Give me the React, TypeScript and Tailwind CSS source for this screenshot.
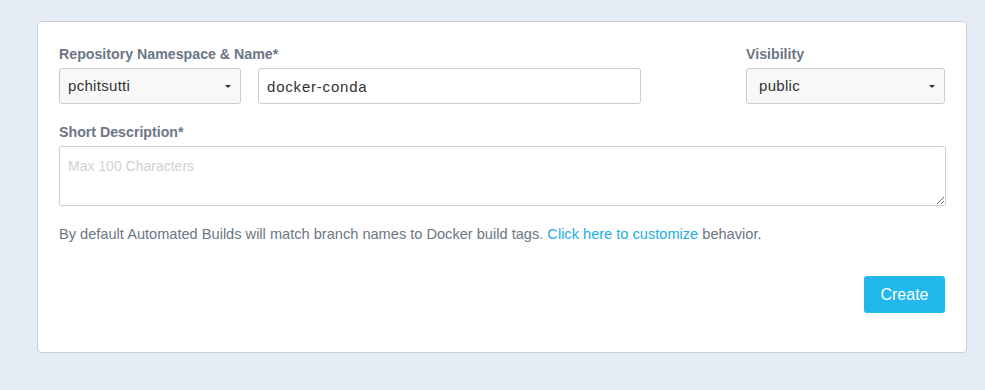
export default function App() {
  return (
    <div
      className="min-h-[390px] w-full bg-[#e6ecf5] pt-[21px] pl-[37px] pr-[19px]"
      style={{ fontFamily: '"Liberation Sans", Arial, sans-serif' }}
    >
      <div className="w-[930px] h-[332px] bg-white border border-[#c9ced6] rounded px-[21px] pt-[23px]">
        {/* Repo name row */}
        <div className="flex">
          <div>
            <label className="block text-[14.2px] font-bold text-[#6c7686] leading-[18px] mb-[5px]">
              Repository Namespace &amp; Name*
            </label>
            <div className="flex gap-[17px]">
              <div className="relative w-[182px] h-[36px] bg-[#f8f8f8] border border-[#ccc] rounded-[3px] flex items-center pl-[8px] text-[15px] tracking-[0.3px] text-[#333]">
                pchitsutti
                <span className="absolute right-[9px] top-[16px] w-0 h-0 border-l-[3px] border-r-[3px] border-t-[3px] border-l-transparent border-r-transparent border-t-[#333]" />
              </div>
              <input
                className="w-[383px] h-[36px] border border-[#ccc] rounded-[3px] px-[8px] text-[15px] tracking-[0.8px] text-[#333] outline-none"
                defaultValue="docker-conda"
              />
            </div>
          </div>
          <div className="ml-auto w-[199px]">
            <label className="block text-[14.2px] font-bold text-[#6c7686] leading-[18px] mb-[5px]">
              Visibility
            </label>
            <div className="relative w-[199px] h-[36px] bg-[#f8f8f8] border border-[#ccc] rounded-[3px] flex items-center pl-[12px] text-[15px] tracking-[0.3px] text-[#333]">
              public
              <span className="absolute right-[9px] top-[16px] w-0 h-0 border-l-[3px] border-r-[3px] border-t-[3px] border-l-transparent border-r-transparent border-t-[#333]" />
            </div>
          </div>
        </div>

        {/* Short description */}
        <label className="block text-[14.2px] font-bold text-[#6c7686] leading-[18px] mt-[19px] mb-[5px]">
          Short Description*
        </label>
        <textarea
          className="block w-[887px] h-[60px] border border-[#ccc] rounded-[3px] px-[8px] py-[9px] text-[14px] text-[#333] placeholder:text-[#d2d2d2] outline-none"
          placeholder="Max 100 Characters"
        />

        <p className="mt-[19px] text-[14.6px] text-[#6c7686] leading-[18px]">
          By default Automated Builds will match branch names to Docker build tags.{" "}
          <a className="text-[#22aee6]" href="#">
            Click here to customize
          </a>{" "}
          behavior.
        </p>

        <div className="flex justify-end mt-[33px]">
          <button className="w-[81px] h-[37px] bg-[#22b8eb] rounded-[3px] text-white text-[16px]">
            Create
          </button>
        </div>
      </div>
    </div>
  );
}
